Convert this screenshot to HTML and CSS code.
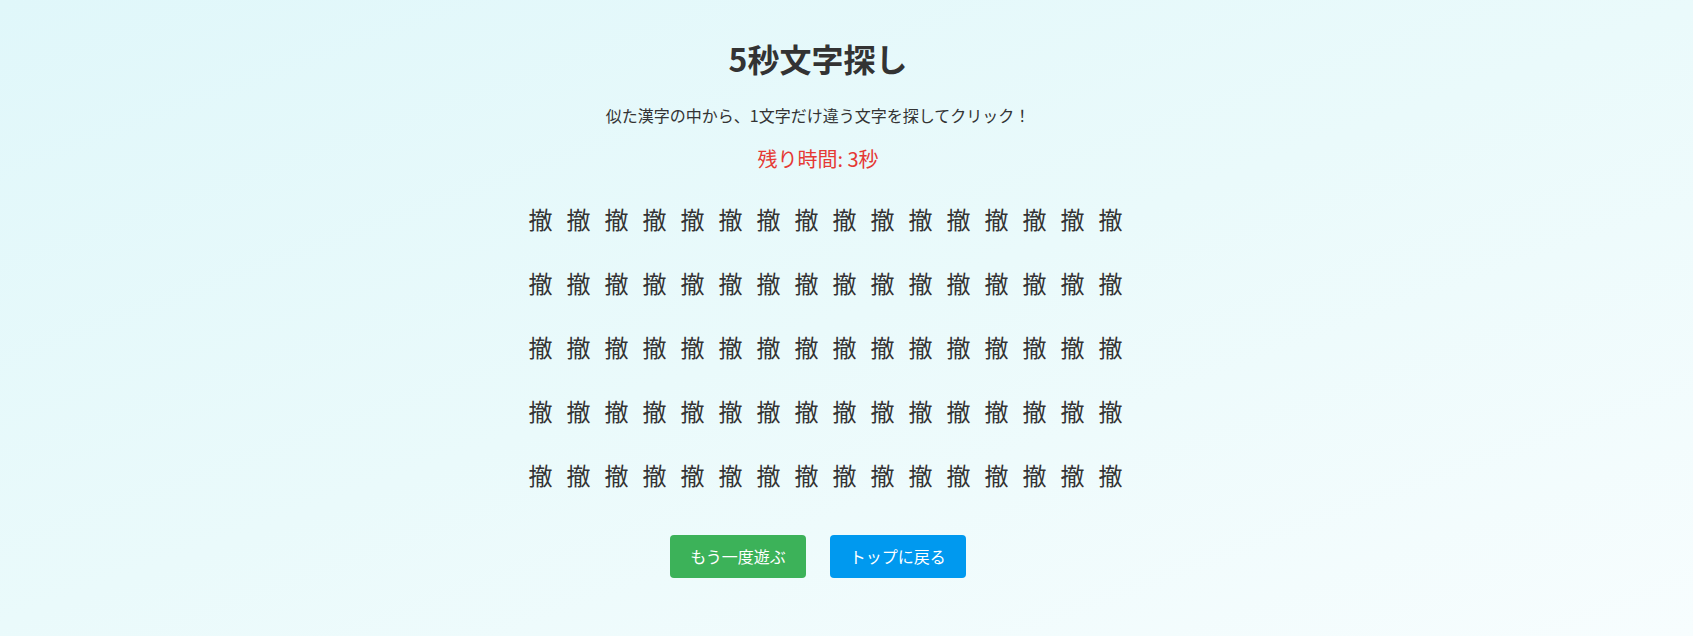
FILE: index.html
```html
<!DOCTYPE html>
<html lang="ja">
<head>
<meta charset="utf-8">
<title>5秒文字探し</title>
<link rel="stylesheet" href="styles.css">
</head>
<body>
<main class="page">
  <h1 class="title">5秒文字探し</h1>
  <p class="lead">似た漢字の中から、1文字だけ違う文字を探してクリック！</p>
  <p class="timer">残り時間: 3秒</p>
  <div class="grid" id="grid"></div>
  <div class="actions">
    <button class="btn btn-green">もう一度遊ぶ</button>
    <button class="btn btn-blue">トップに戻る</button>
  </div>
</main>
<script>
  var g = document.getElementById('grid');
  for (var i = 0; i < 80; i++) {
    var s = document.createElement('span');
    s.className = 'cell';
    s.textContent = '撤';
    g.appendChild(s);
  }
</script>
</body>
</html>
```
FILE: styles.css
```css
html, body {
  margin: 0;
  height: 100%;
}
body {
  background: linear-gradient(160deg, #e0f7fa 0%, #eafafb 50%, #f7fdfe 100%);
  font-family: "Noto Sans CJK JP", "Noto Sans", sans-serif;
  color: #333;
  padding-right: 57px;
  box-sizing: border-box;
}
.page {
  text-align: center;
  padding-top: 38px;
}
.title {
  margin: 0 0 25px;
  font-size: 32px;
  line-height: 40px;
  font-weight: 700;
}
.lead {
  margin: 0 0 18px;
  font-size: 16px;
  line-height: 24px;
}
.timer {
  margin: 0 0 14px;
  font-size: 20px;
  line-height: 28px;
  color: #e53935;
}
.grid {
  display: grid;
  grid-template-columns: repeat(16, 38px);
  grid-auto-rows: 64px;
  justify-content: center;
  padding-left: 15px;
}
.cell {
  font-size: 24px;
  line-height: 64px;
  text-align: center;
  cursor: pointer;
}
.actions {
  display: flex;
  justify-content: center;
  gap: 24px;
  margin-top: 28px;
}
.btn {
  border: none;
  border-radius: 4px;
  color: #fff;
  font-family: inherit;
  font-size: 16px;
  line-height: 19px;
  padding: 12px 20px;
  cursor: pointer;
}
.btn-green { background: #3cb259; }
.btn-blue { background: #0099ef; }
```
